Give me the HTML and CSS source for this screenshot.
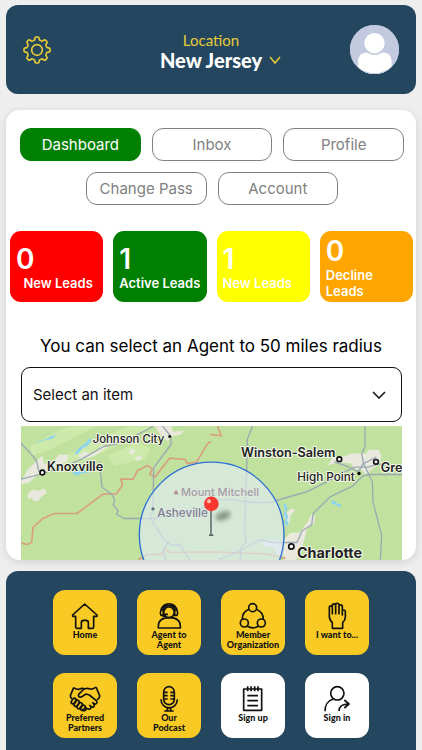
FILE: index.html
```html
<!DOCTYPE html>
<html lang="en">
<head>
  <meta charset="UTF-8">
  <meta name="viewport" content="width=device-width, initial-scale=1.0">
  <title>Dashboard</title>
  <link rel="stylesheet" href="styles.css">
</head>
<body>
  <header class="topbar">
    <button type="button" class="icon-btn" aria-label="Settings">
      <svg class="gear" viewBox="0 0 84 84">
        <defs>
          <path id="tooth" d="M30.1 13.4Q35 14 35.5 8Q36 3 39 3H45Q48 3 48.5 8Q49 14 53.9 13.4"/>
        </defs>
        <use href="#tooth"/>
        <use href="#tooth" transform="rotate(45 42 42)"/>
        <use href="#tooth" transform="rotate(90 42 42)"/>
        <use href="#tooth" transform="rotate(135 42 42)"/>
        <use href="#tooth" transform="rotate(180 42 42)"/>
        <use href="#tooth" transform="rotate(225 42 42)"/>
        <use href="#tooth" transform="rotate(270 42 42)"/>
        <use href="#tooth" transform="rotate(315 42 42)"/>
        <circle cx="42" cy="42" r="16"/>
      </svg>
    </button>
    <button type="button" class="location">
      <span class="location-label">Location</span>
      <span class="location-name">New Jersey
        <svg class="location-arrow" viewBox="0 0 12 8"><path d="M1 1l5 6 5-6"/></svg>
      </span>
    </button>
    <button type="button" class="icon-btn" aria-label="Account">
      <svg class="avatar" viewBox="0 0 146 146">
        <clipPath id="round"><circle cx="73" cy="73" r="73"/></clipPath>
        <g clip-path="url(#round)">
          <rect width="146" height="146" fill="#c3cae0"/>
          <path d="M24 146v-36q0-28 28-28h44q28 0 28 28v36z" fill="#fff"/>
          <circle cx="73" cy="54" r="33" fill="#fff" stroke="#c3cae0" stroke-width="5"/>
          <circle cx="73" cy="73" r="73" fill="none" stroke="#c3cae0" stroke-width="4"/>
        </g>
      </svg>
    </button>
  </header>

  <main class="card">
    <nav class="tabs">
      <button type="button" class="tab active">Dashboard</button>
      <button type="button" class="tab">Inbox</button>
      <button type="button" class="tab">Profile</button>
      <button type="button" class="tab">Change Pass</button>
      <button type="button" class="tab">Account</button>
    </nav>

    <section class="stats">
      <div class="stat red"><strong>0</strong><span class="centered">New Leads</span></div>
      <div class="stat green"><strong>1</strong><span>Active Leads</span></div>
      <div class="stat yellow"><strong>1</strong><span>New Leads</span></div>
      <div class="stat orange"><strong>0</strong><span>Decline Leads</span></div>
    </section>

    <label class="radius-label" for="agent">You can select an Agent to 50 miles radius</label>
    <div class="select-box">
      <select id="agent">
        <option>Select an item</option>
      </select>
      <svg class="select-arrow" viewBox="0 0 14 8"><path d="M1 1l6 6 6-6"/></svg>
    </div>

    <svg class="map" viewBox="0 0 1143 403" preserveAspectRatio="xMidYMid slice">
      <defs>
        <filter id="soft" x="-50%" y="-50%" width="200%" height="200%"><feGaussianBlur stdDeviation="6"/></filter>
      </defs>
      <rect width="1143" height="403" fill="#c1e29f"/>

      <!-- lighter valleys -->
      <g fill="#cdeaaa">
        <path d="M30 60l90-50 50-10h60l-60 30-80 40-60 20zM120 100l110-60 100-40h60l-60 40-130 60-60 20zM260 90l90-40 40 20-20 30-90 20z"/>
      </g>

      <!-- towns -->
      <g fill="#e8e9dc">
        <path d="M0 170l20-40 25-22 18-18 8 25 30-12 12-16 30 0-5 20-30 12-30 20-30 10-24 22-24 4z"/>
        <path d="M20 205l14-14 16 4 20-6 8 12-16 10-10 16-14-2-6-8-12 2z"/>
        <path d="M170 90l20-14 20 8 24-14 6-12 20 4-20 16-26 14-30 10zM320 82l12-14 12 6-8 12zM340 96l18-8 6 10-16 8z"/>
        <path d="M400 0h50l6 18 34-4-10 12-30 6-10 14-20-18z"/>
        <path d="M920 118l15-24 40-4 20-8 40 2 8-12h30l8 16-4 26-26 18-18 14-12-14-18-2-14-18-36-2z"/>
        <path d="M788 403v-60l20-22 30-2 10-16 15-20 6-16 14 2-4 24-20 14-6 22-8 30-10 34-12 10z"/>
        <path d="M720 350l40-8 28 8v40l-20-4-10-20-20-4z" fill="#e1e9e6"/>
        <path d="M790 268l20-20 14 4-14 14-6 30-10 4z"/>
      </g>

      <!-- lakes -->
      <g fill="#8fd4ef">
        <path d="M48 50l30-12 28-14-10 14-26 6-20 8zM160 84l14-18 20-14 10-14 8 4-10 16-18 10-16 18zM152 142l18-10 30 2 16-6-10 12-24 2-12 8z"/>
        <path d="M786 232l10 4 4 14-6 10 8 10-4 14 6 8-8 10-6-14 4-12-6-12 4-14zM930 226l10-2 8 8 12 4-2 10-12-8-14-4z"/>
      </g>

      <!-- state borders -->
      <g class="border">
        <path d="M0 352l18 4 14-6 4-45 30-27 34-15h68l78-58 40-1 18-26-4-18 36 0 14-26 31-15 13 12-8 14 16 8 44-56 48 4 4 12 28-4 34-56 10-6"/>
        <path d="M352 402l24-14 46-4 10-16 14 12 120-2 168 6 60 14"/>
        <path d="M567 26l18 2 16 2-12-30"/>
      </g>

      <!-- highways -->
      <g class="road">
        <path d="M0 160l40-10 28-8 60-20 54-22 66-38 40-8 36-14 60-32 14-8"/>
        <path d="M0 52l30 32 16 20 8 34"/>
        <path d="M424 0l26 32v24l-52 70-2 128-10 20 44 68 22 16 24-2 34 52"/>
        <path d="M235 108l8 76 30 22 8 16-4 16 14 16-4 12 22 12h92l56-12 50-14h30l40-30 60 0 60 8 50 0 60-18 50-14 60-30 40-24 44-20 40 0 34-10 36 14 30-4h40"/>
        <path d="M695 0l-16 40-3 120-5 150 4 40-14 12-4 40"/>
        <path d="M592 402l50-20 74-40 38 8h74l16-36 28-16 4-34 50-50 70-34 30-30 20-4h97"/>
        <path d="M1032 0v64l-10 20 6 30 26 54 2 60 26 100-4 74"/>
        <path d="M940 108l40 14 32 16 14-24 40-20M442 346l-16 30 10 26"/>
      </g>

      <!-- search radius -->
      <circle class="radius" cx="572" cy="326" r="217"/>

      <g class="dots">
        <circle cx="64" cy="140" r="7"/>
        <circle cx="955" cy="100" r="7"/>
        <circle cx="1065" cy="108" r="7"/>
        <circle cx="811" cy="362" r="8"/>
      </g>
      <rect x="442" y="28" width="8" height="8" rx="2"/>
      <circle cx="1014" cy="143" r="5"/>
      <circle cx="396" cy="249" r="5" fill="#626e76"/>
      <path d="M457 205l8-14 8 14z" fill="#b88e88"/>

      <g class="places">
        <text x="215" y="52" font-size="34">Johnson City</text>
        <text x="78" y="136" font-size="38" class="strong">Knoxville</text>
        <text x="660" y="95" font-size="38" class="strong">Winston-Salem</text>
        <text x="829" y="167" font-size="35">High Point</text>
        <text x="1079" y="138" font-size="38" class="strong">Gre</text>
        <text x="828" y="398" font-size="43" class="bold">Charlotte</text>
        <text x="480" y="212" font-size="33" class="faded">Mount Mitchell</text>
        <text x="409" y="275" font-size="35" class="muted">Asheville</text>
      </g>

      <!-- pin -->
      <ellipse cx="606" cy="270" rx="24" ry="13" fill="#607060" opacity=".65" filter="url(#soft)" transform="rotate(-20 606 270)"/>
      <path d="M570 250v76" stroke="#7b8585" stroke-width="6"/>
      <path d="M564 328h13" stroke="#444" stroke-width="4"/>
      <circle cx="571" cy="234" r="22" fill="#f9392f"/>
      <circle cx="564" cy="226" r="6" fill="#ffc0b8"/>
    </svg>
  </main>

  <footer class="menu">
    <a href="#" class="tile">
      <svg viewBox="0 0 96 84"><path d="M47 6L84 39v4H74v33q0 3-3 3H58V62q0-7-7-7h-7q-7 0-7 7v17H24q-4 0-4-3V43H11v-4z"/></svg>
      <span>Home</span>
    </a>
    <a href="#" class="tile">
      <svg viewBox="0 0 96 84">
        <path d="M16 78v-5c0-18 14-26 33-26s33 8 33 26v5z"/>
        <circle cx="48" cy="31" r="16"/>
        <path d="M24 27C25-2 71-2 72 27M30 25c3-19 33-19 36 0M31 24h-7q-4 9 0 16h7zM65 24h7q4 9 0 16h-7zM29 40q3 5 8 1M36 37h9"/>
      </svg>
      <span>Agent to Agent</span>
    </a>
    <a href="#" class="tile">
      <svg viewBox="0 0 96 84">
        <circle cx="47" cy="17" r="12"/><circle cx="22" cy="63" r="12"/><circle cx="73" cy="63" r="12"/>
        <path d="M36 22Q15 31 16 52M58 22q21 9 21 30M31 73q17 9 33 0"/>
      </svg>
      <span>Member Organization</span>
    </a>
    <a href="#" class="tile">
      <svg viewBox="0 0 96 84"><path d="M34 79V62Q25 54 25 43V17c0-7 9-7 9 0v18V11c0-7 10-7 10 0v24V9c0-7 10-7 10 0v26V14c0-7 10-7 10 0v25V29c0-7 9-6 9 0v16q0 9-8 17v17z"/></svg>
      <span>I want to...</span>
    </a>
    <a href="#" class="tile">
      <svg viewBox="0 0 96 84">
        <path d="M14 8L4 32q0 7 6 10M14 8q9 6 17 5M31 13q9-5 16-1M81 6l11 26q0 8-8 12M81 6q-7 7-17 6-13-5-22 3L29 28q-3 10 8 8l14-9 10 3 21 17q5 7-2 10-6 1-10-5M71 53q8 8 2 13-6 2-12-6M62 60q7 8 1 12-6 2-13-4M50 68q3 9-5 9l-7-4"/>
        <rect x="9" y="39" width="10" height="18" rx="5" transform="rotate(35 14 48)"/>
        <rect x="18" y="45" width="10" height="20" rx="5" transform="rotate(35 23 55)"/>
        <rect x="27" y="52" width="10" height="20" rx="5" transform="rotate(35 32 62)"/>
        <rect x="37" y="60" width="10" height="17" rx="5" transform="rotate(35 42 68)"/>
      </svg>
      <span>Preferred Partners</span>
    </a>
    <a href="#" class="tile">
      <svg viewBox="0 0 96 84">
        <rect x="32" y="5" width="32" height="54" rx="16"/>
        <path d="M24 43c0 34 49 34 49 0M43 67v11M53 67v11M34 78h28M32 22h12M32 32h12M32 42h12M64 22H52M64 32H52M64 42H52"/>
      </svg>
      <span>Our<br>Podcast</span>
    </a>
    <a href="#" class="tile white">
      <svg viewBox="0 0 96 84"><path d="M20 12h54v64H20zM32 4v15M42 4v15M53 4v15M63 4v15M31 32h32M31 47h32M31 62h32"/></svg>
      <span>Sign up</span>
    </a>
    <a href="#" class="tile white">
      <svg viewBox="0 0 96 84"><circle cx="49" cy="25" r="20"/><path d="M12 79c0-18 9-33 25-37M54 78c0-13 8-21 29-21M70 45l14 12-14 12"/></svg>
      <span>Sign in</span>
    </a>
  </footer>
</body>
</html>
```
FILE: styles.css
```css
* {
  box-sizing: border-box;
}

body {
  display: flex;
  flex-direction: column;
  min-height: 100vh;
  margin: 0;
  padding: 5px 6px 0;
  background: #eeeeee;
  font-family: Inter, sans-serif;
}

button {
  padding: 0;
  border: none;
  background: none;
  font-family: inherit;
  cursor: pointer;
}

svg {
  display: block;
}

.topbar {
  display: flex;
  align-items: center;
  justify-content: space-between;
  padding: 20px 17px;
  border-radius: 12px;
  background: #24475f;
}

.icon-btn {
  display: flex;
  width: 49px;
}

.gear {
  width: 28px;
  height: 28px;
  fill: none;
  stroke: #e8cb35;
  stroke-width: 5;
}

.avatar {
  width: 49px;
  height: 49px;
}

.location {
  display: flex;
  flex-direction: column;
  align-items: center;
  padding-top: 3px;
  font-family: Lato, sans-serif;
}

.location-label {
  color: #e8cb35;
  font-size: 15px;
  line-height: 18px;
}

.location-name {
  display: flex;
  align-items: center;
  gap: 7px;
  padding-left: 19px;
  color: #fff;
  font-size: 20px;
  font-weight: 900;
  line-height: 22px;
}

.location-arrow {
  width: 12px;
  height: 8px;
  fill: none;
  stroke: #e8cb35;
  stroke-width: 1.5;
}

.card {
  margin-top: 16px;
  padding-top: 18px;
  border-radius: 14px;
  background: #fff;
  box-shadow: 0 2px 8px rgba(0, 0, 0, 0.12);
  overflow: hidden;
}

.tabs {
  display: flex;
  flex-wrap: wrap;
  justify-content: center;
  gap: 11px;
  padding: 0 12px 0 14px;
}

.tab {
  flex: 0 0 calc((100% - 22px) / 3);
  height: 33px;
  border: 1px solid #808080;
  border-radius: 11px;
  color: #808080;
  font-size: 15px;
}

.tab.active {
  border-color: #008000;
  background: #008000;
  color: #fff;
}

.stats {
  display: grid;
  grid-template-columns: repeat(4, 1fr);
  gap: 10px;
  margin-top: 26px;
  padding: 0 3px 0 4px;
}

.stat {
  display: flex;
  flex-direction: column;
  justify-content: center;
  height: 71px;
  padding: 0 3px 0 6px;
  border-radius: 11px;
  color: #fff;
  font-size: 13px;
  font-weight: 600;
  line-height: 16px;
}

.stat strong {
  font-size: 28px;
  font-weight: 600;
  line-height: 32px;
}

.centered {
  text-align: center;
}

.red {
  background: #ff0000;
}

.green {
  background: #008000;
}

.yellow {
  background: #ffff00;
}

.orange {
  background: #ffa500;
}

.radius-label {
  display: block;
  margin-top: 32px;
  text-align: center;
  font-size: 17px;
  line-height: 24px;
}

.select-box {
  position: relative;
  margin: 9px 14px 4px 15px;
}

.select-box select {
  display: block;
  width: 100%;
  height: 55px;
  padding: 0 11px;
  border: 1px solid #111;
  border-radius: 9px;
  appearance: none;
  background: #fff;
  color: #111;
  font-family: inherit;
  font-size: 15px;
}

.select-arrow {
  position: absolute;
  top: 24px;
  right: 16px;
  width: 14px;
  height: 8px;
  fill: none;
  stroke: #111;
  stroke-width: 1.5;
  pointer-events: none;
}

.map {
  width: calc(100% - 29px);
  height: 134px;
  margin-left: 15px;
}

.border {
  fill: none;
  stroke: #d7a080;
  stroke-width: 5;
}

.road {
  fill: none;
  stroke: #9ca9b4;
  stroke-width: 4;
  stroke-linejoin: round;
}

.radius {
  fill: rgba(224, 234, 242, 0.68);
  stroke: #2b70d6;
  stroke-width: 4;
}

.dots {
  fill: #fff;
  stroke: #111;
  stroke-width: 5;
}

.places {
  fill: #222;
  stroke: #f3f8e8;
  stroke-width: 6;
  stroke-linejoin: round;
  paint-order: stroke;
  font-weight: 500;
}

.strong {
  font-weight: 600;
}

.bold {
  font-weight: 700;
}

.faded {
  fill: #a49da3;
  stroke: #dfeae0;
}

.muted {
  fill: #7d7e92;
  stroke: #dfeae0;
}

.menu {
  display: grid;
  flex: 1;
  grid-template-columns: repeat(4, 64px);
  justify-content: center;
  align-content: start;
  gap: 18px 20px;
  margin-top: 11px;
  padding: 19px 0 12px;
  border-radius: 12px 12px 0 0;
  background: #24475f;
}

.tile {
  display: flex;
  flex-direction: column;
  align-items: center;
  height: 65px;
  padding-top: 12px;
  border-radius: 12px;
  background: #f8ca23;
  color: #111;
  font-family: Lato, sans-serif;
  font-size: 9px;
  font-weight: 900;
  line-height: 10px;
  text-align: center;
  text-decoration: none;
}

.tile svg {
  width: 32px;
  height: 28px;
  fill: none;
  stroke: #111;
  stroke-width: 5;
  stroke-linejoin: round;
}

.tile span {
  max-width: 54px;
}

.white {
  background: #fff;
}
```
